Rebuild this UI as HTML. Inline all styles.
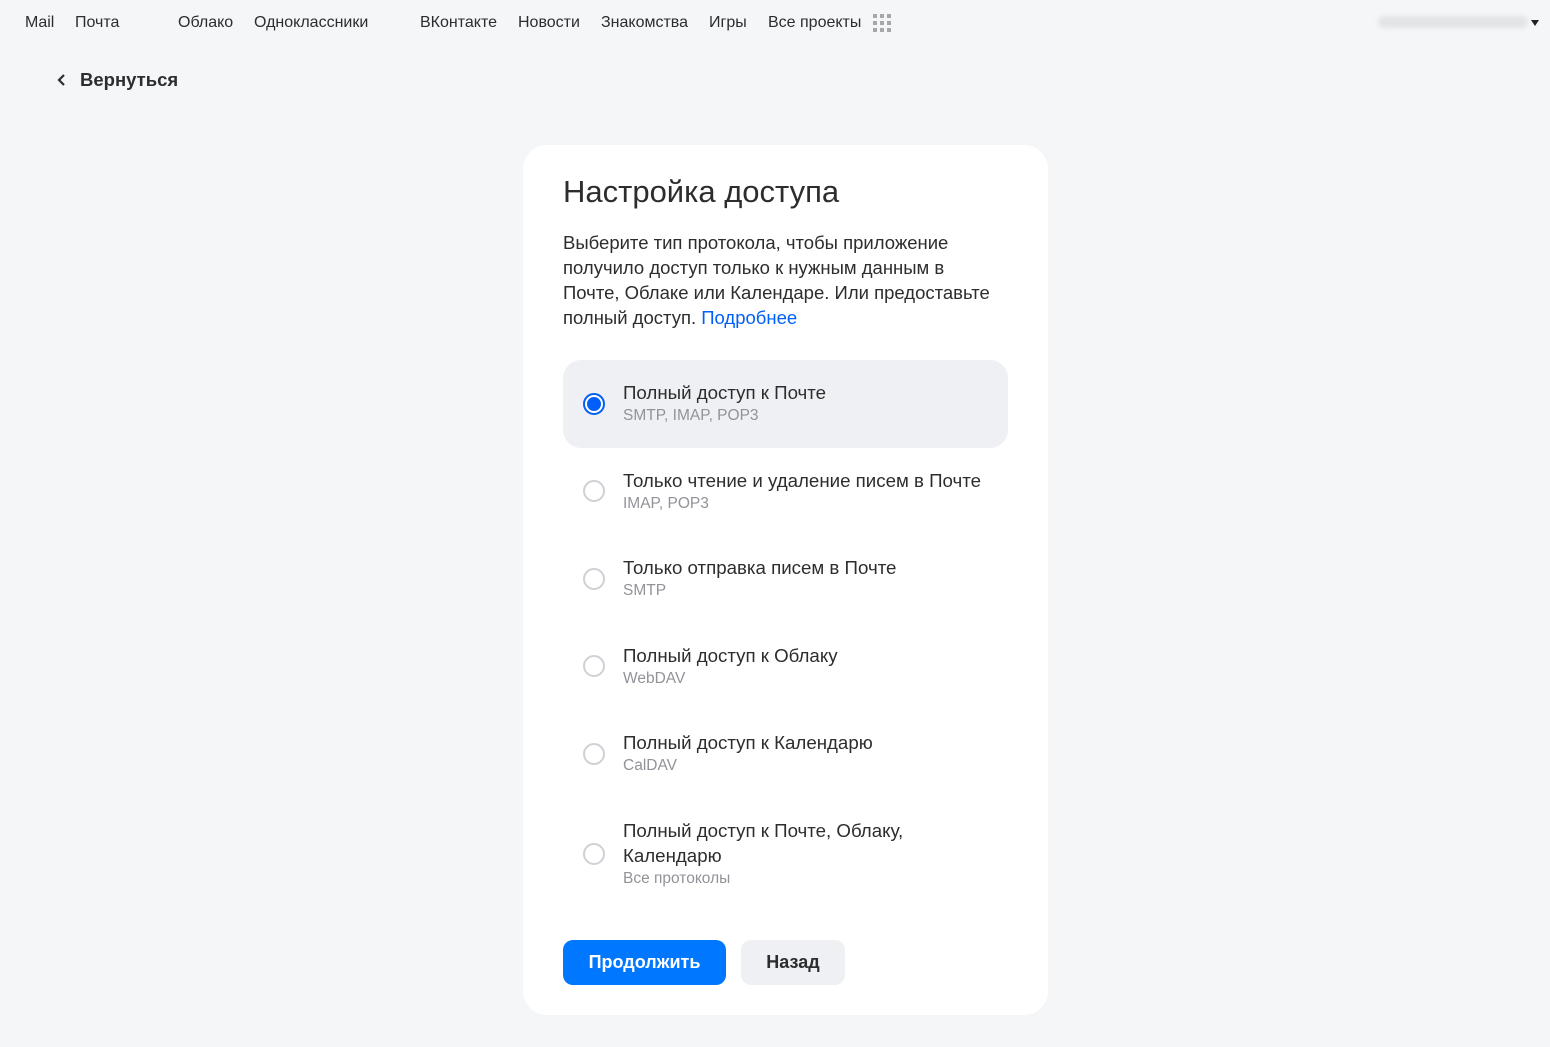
<!DOCTYPE html>
<html><head><meta charset="utf-8"><style>
*{margin:0;padding:0;box-sizing:border-box}
body{width:1550px;height:1047px;background:#f5f6f8;font-family:"Liberation Sans","DejaVu Sans",sans-serif;color:#2c2d2e;position:relative;overflow:hidden}
.a{position:absolute;white-space:nowrap}
.nav{font-size:16px;top:14px;color:#2c2d2e;}
.card{position:absolute;left:523px;top:145px;width:525px;height:870px;background:#fff;border-radius:24px}
.sel{position:absolute;left:563px;top:360px;width:445px;height:88px;background:#eff0f3;border-radius:18px}
.r{position:absolute;left:583px;width:22px;height:22px;border-radius:50%;border:2px solid #cfd1d6;background:#fff}
.t{font-size:18.7px;color:#2c2d2e;left:623px}
.s{font-size:15.5px;color:#919399;left:623px}
.dots{position:absolute;left:873px;top:14px;width:18px;height:18px;display:grid;grid-template-columns:repeat(3,4px);gap:3px}
.dots i{width:4px;height:4px;background:#a5a7ab;display:block}
</style></head><body>
<div class="a nav" style="left:25px">Mail</div>
<div class="a nav" style="left:75px">Почта</div>
<div class="a nav" style="left:178px">Облако</div>
<div class="a nav" style="left:254px">Одноклассники</div>
<div class="a nav" style="left:420px">ВКонтакте</div>
<div class="a nav" style="left:518px">Новости</div>
<div class="a nav" style="left:601px">Знакомства</div>
<div class="a nav" style="left:709px">Игры</div>
<div class="a nav" style="left:768px">Все проекты</div>
<div class="dots"><i></i><i></i><i></i><i></i><i></i><i></i><i></i><i></i><i></i></div>
<div class="a" style="left:1378px;top:16px;width:150px;height:12px;background:#e3e4e6;border-radius:6px;filter:blur(2px)"></div>
<div class="a" style="left:1531px;top:20px;width:0;height:0;border-left:4px solid transparent;border-right:4px solid transparent;border-top:6px solid #222"></div>
<svg class="a" style="left:56px;top:73px" width="12" height="14" viewBox="0 0 12 14"><path d="M8 2 L3 7 L8 12" stroke="#2c2d2e" stroke-width="2.2" fill="none"/></svg>
<div class="a" style="left:80px;top:69px;font-size:18.5px;font-weight:bold;color:#2c2d2e">Вернуться</div>
<div class="card"></div>
<div class="a" style="left:563px;top:174px;font-size:31px;color:#2c2d2e">Настройка доступа</div>
<div class="a" style="left:563px;top:230px;font-size:18.5px;line-height:25px;color:#2c2d2e">Выберите тип протокола, чтобы приложение<br>получило доступ только к нужным данным в<br>Почте, Облаке или Календаре. Или предоставьте<br>полный доступ. <span style="color:#005ff9">Подробнее</span></div>
<div class="sel"></div>
<div class="r" style="top:393px;border-color:#005ff9"><div style="position:absolute;left:2px;top:2px;width:14px;height:14px;border-radius:50%;background:#005ff9"></div></div>
<div class="a t" style="top:382px">Полный доступ к Почте</div>
<div class="a s" style="top:407px">SMTP, IMAP, POP3</div>
<div class="r" style="top:480px"></div>
<div class="a t" style="top:470px">Только чтение и удаление писем в Почте</div>
<div class="a s" style="top:495px">IMAP, POP3</div>
<div class="r" style="top:568px"></div>
<div class="a t" style="top:557px">Только отправка писем в Почте</div>
<div class="a s" style="top:582px">SMTP</div>
<div class="r" style="top:655px"></div>
<div class="a t" style="top:645px">Полный доступ к Облаку</div>
<div class="a s" style="top:670px">WebDAV</div>
<div class="r" style="top:743px"></div>
<div class="a t" style="top:732px">Полный доступ к Календарю</div>
<div class="a s" style="top:757px">CalDAV</div>
<div class="r" style="top:843px"></div>
<div class="a t" style="top:820px">Полный доступ к Почте, Облаку,</div>
<div class="a t" style="top:845px">Календарю</div>
<div class="a s" style="top:870px">Все протоколы</div>
<div class="a" style="left:563px;top:940px;width:163px;height:45px;background:#0077ff;border-radius:10px;color:#fff;font-size:18px;font-weight:bold;text-align:center;line-height:45px">Продолжить</div>
<div class="a" style="left:741px;top:940px;width:104px;height:45px;background:#eff0f3;border-radius:10px;color:#2c2d2e;font-size:18px;font-weight:bold;text-align:center;line-height:45px">Назад</div>
</body></html>
